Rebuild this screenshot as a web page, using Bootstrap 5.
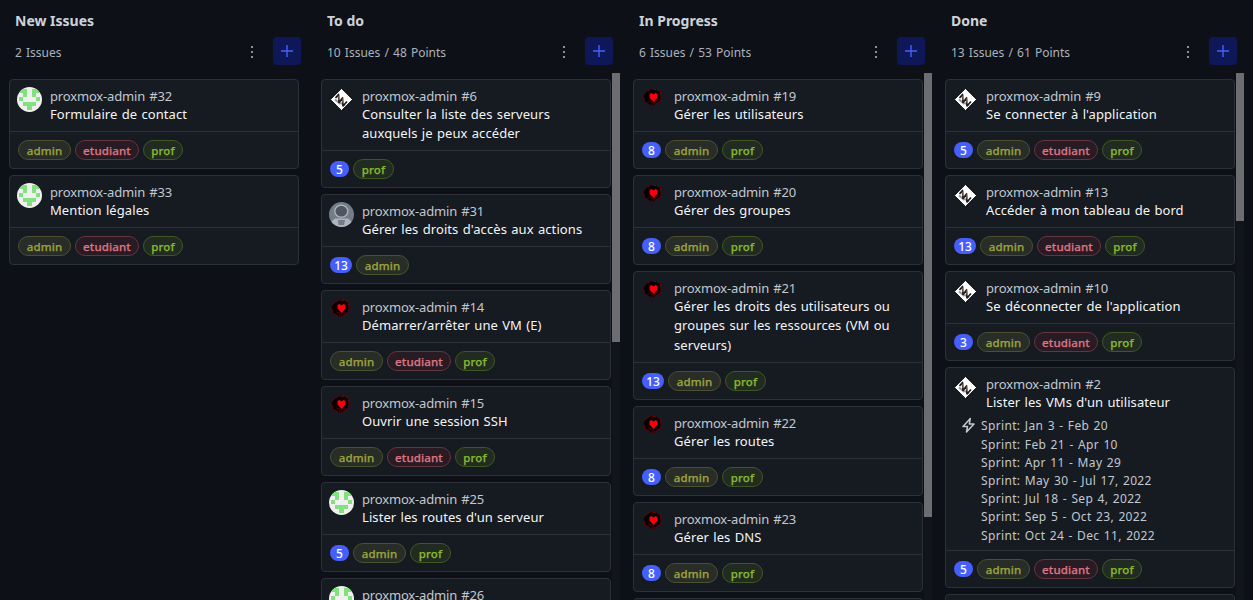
<!DOCTYPE html>
<html lang="fr" data-bs-theme="dark">
<head>
<meta charset="utf-8">
<meta name="viewport" content="width=device-width, initial-scale=1">
<title>Board</title>
<link href="https://cdn.jsdelivr.net/npm/bootstrap@5.3.0/dist/css/bootstrap.min.css" rel="stylesheet">
<style>
body{background:#0d1017;color:#c5cbd3;font-family:"Noto Sans",sans-serif;font-size:13px;height:600px;overflow:hidden}
.board{height:600px;padding-left:9px;gap:10px}
.lane{width:302px;flex:none}
.lane-title{font-size:14px;font-weight:700;line-height:20px;padding:11px 0 0 6px;color:#cdd3da}
.lane-bar{height:28px;margin:6px 10px 8px 6px;color:#abb2bb}
.lane-bar .count{font-size:12px;line-height:24px;padding-top:4px;word-spacing:1px}
.dots{margin-top:2px}
.add{width:28px;height:28px;background:#0e1858;border-radius:4px;margin-left:14px}
.lane-list{flex:1;min-height:0;overflow:hidden;padding-top:6px;gap:6px}
.issue{width:290px;flex:none;background:#161a21;border:1px solid #2c3038;border-radius:4px}
.issue-head{padding:7px 7px 6.55px}
.issue-body{margin-left:8px}
.ref{line-height:18px;color:#c1c8d0;letter-spacing:-.17px;word-spacing:1px}
.ttl{line-height:19.45px;color:#f3f5f7;letter-spacing:.08px;word-spacing:.8px;min-height:19.45px}
.foot{border-top:1px solid #2c3038;padding:8px;height:37px;gap:4px}
.sprints{margin:5px 0 -1.4px 9px;font-size:12px;line-height:18.2px;color:#c1c8d0;gap:6px;letter-spacing:.35px;word-spacing:.9px}
.pt{background:#465ffa;color:#fff;height:16px;width:19px;border-radius:8px;font-size:12px;line-height:18px;text-align:center;font-weight:500}
.pt.wide{width:22px}
.tag{height:20px;line-height:19px;border:1px solid;border-radius:10px;font-size:11.5px;font-weight:500;letter-spacing:.15px;text-align:center;white-space:nowrap;-webkit-text-stroke:.25px}
.admin{width:53px;color:#9ba33f;background:#292d27;border-color:#4a5030}
.etudiant{width:64px;color:#dd7585;background:#291b23;border-color:#66343f}
.prof{width:40px;color:#86b92b;background:#222b22;border-color:#40571f}
.pt+.prof,.pt~.admin+.prof{width:41px}
.track{top:73px;right:3px;width:8px;bottom:0;background:#11141b}
.thumb{width:8px;background:#6c6d70}
</style>
</head>
<body>
<svg class="d-none">
<symbol id="pixel" viewBox="0 0 25 25"><circle cx="12.5" cy="12.5" r="12.5" fill="#f0f0f0"/><g clip-path="url(#round)" fill="#82e07e" shape-rendering="crispEdges"><path d="M2 2h8v8H6V6H2zM15 2h8v4h-4v4h-4zM2 10h4v4H2zM19 10h4v4h-4zM6 14.500h13V19h-4v4h-5v-4H6z"/></g></symbol>
<symbol id="diamond" viewBox="0 0 25 25"><path d="M12.5 1.500 23.500 12.5 12.5 23.500 1.500 12.5z" fill="#fff" stroke="#050607" stroke-width=".8"/><path d="m6 12.500 5.500 4.500M11 15.500l5 3" stroke="#999" stroke-width="2"/><path d="m6.500 11 3-3.500.5 8 3.500-4.500.5 8 4-4.500" fill="none" stroke="#211a1c" stroke-width="1.7" stroke-linejoin="round"/><path d="m9.300 8.500.8 5M13.300 11.500l.8 5" stroke="#b58586" stroke-width=".6"/></symbol>
<symbol id="heart" viewBox="0 0 25 25"><path d="m8.500 3 1-1.500 2.500 1 3.500 0 2 1.500 2.500 0-1 3 1 3.500-1 4.500-3 1-2.500 3-2-.5-2 .5-2-2.500-3.500-1-1-4.500-1-1 1-3 2.500-2.500z" fill="#050204" stroke="#740009" stroke-dasharray="2 .8"/><path d="m7 14 4 1v3M17 14l-4 1v3" fill="none" stroke="#500007"/><path d="M12.500 15 8.500 10.500V7l2-1 2 1.500L14.500 6l2 1v3.500z" fill="#fb0009"/></symbol>
<symbol id="person" viewBox="0 0 25 25"><circle cx="12.500" cy="12.500" r="12.500" fill="#757c87"/><g clip-path="url(#round)"><path d="M1 25v-4l5-4.500h13l5 4.500v4z" fill="#aeb5bf"/><path d="M9 18h7l-1 5H9.500z" fill="#757c87"/></g><ellipse cx="12.300" cy="9.200" rx="6.500" ry="6" fill="#4f5661" stroke="#aeb5bf" stroke-width="1.300"/></symbol>
</svg>
<svg width="0" height="0" class="position-absolute"><clipPath id="round"><circle cx="12.5" cy="12.5" r="12.5"/></clipPath></svg>
<main class="board d-flex" id="board"></main>
<script>
const A='admin',E='etudiant',P='prof';
const lanes=[
 ['New Issues','2 Issues',0,[['pixel',32,'Formulaire de contact',0,[A,E,P]],['pixel',33,'Mention légales',0,[A,E,P]]]],
 ['To do','10 Issues / 48 Points',269,[['diamond',6,'Consulter la liste des serveurs<br>auxquels je peux accéder',5,[P]],['person',31,"Gérer les droits d'accès aux actions",13,[A]],['heart',14,'Démarrer/arrêter une VM (E)',0,[A,E,P]],['heart',15,'Ouvrir une session SSH',0,[A,E,P]],['pixel',25,"Lister les routes d'un serveur",5,[A,P]],['pixel',26,'',0,[]]]],
 ['In Progress','6 Issues / 53 Points',444,[['heart',19,'Gérer les utilisateurs',8,[A,P]],['heart',20,'Gérer des groupes',8,[A,P]],['heart',21,'Gérer les droits des utilisateurs ou<br>groupes sur les ressources (VM ou<br>serveurs)',13,[A,P]],['heart',22,'Gérer les routes',8,[A,P]],['heart',23,'Gérer les DNS',8,[A,P]],['heart',0,'',0,[]]]],
 ['Done','13 Issues / 61 Points',148,[['diamond',9,"Se connecter à l'application",5,[A,E,P]],['diamond',13,'Accéder à mon tableau de bord',13,[A,E,P]],['diamond',10,"Se déconnecter de l'application",3,[A,E,P]],['diamond',2,"Lister les VMs d'un utilisateur",5,[A,E,P],['Jan 3 - Feb 20','Feb 21 - Apr 10','Apr 11 - May 29','May 30 - Jul 17, 2022','Jul 18 - Sep 4, 2022','Sep 5 - Oct 23, 2022','Oct 24 - Dec 11, 2022']],['diamond',0,'',0,[]]]]
];
const bolt='<svg width="13" height="16" viewBox="0 0 13 16" class="flex-shrink-0" fill="none" stroke="#c1c8d0" stroke-width="1.5" stroke-linejoin="round"><path d="M8.300 1.500 1 9.500h4.500L4.500 15 12 7H7.300z"/></svg>';
const issue=([av,n,t,p,tags,sp])=>`<article class="issue"><div class="issue-head"><div class="d-flex align-items-start"><svg width="25" height="25" class="flex-shrink-0"><use href="#${av}"/></svg><div class="issue-body text-nowrap"><div class="ref">${n?'proxmox-admin #'+n:''}</div><div class="ttl">${t}</div></div></div>${sp?`<div class="sprints d-flex">${bolt}<div>${sp.map(s=>`<div>Sprint: ${s}</div>`).join('')}</div></div>`:''}</div><div class="foot d-flex align-items-center">${p?`<span class="pt${p>9?' wide':''}">${p}</span>`:''}${tags.map(x=>`<span class="tag ${x}">${x}</span>`).join('')}</div></article>`;
document.getElementById('board').innerHTML=lanes.map(([h,c,th,list])=>`<section class="lane d-flex flex-column position-relative"><h2 class="lane-title mb-0">${h}</h2><div class="lane-bar d-flex align-items-center"><span class="count me-auto">${c}</span><svg class="dots" width="14" height="16" fill="#8b929c"><path d="M6 2h2v2H6zM6 7h2v2H6zM6 12h2v2H6z"/></svg><span class="add d-flex align-items-center justify-content-center"><svg width="12" height="12" stroke="#465ffa" stroke-width="1.4"><path d="M6 0v12M0 6h12"/></svg></span></div><div class="lane-list d-flex flex-column">${list.map(issue).join('')}</div>${th?`<div class="track position-absolute"><div class="thumb" style="height:${th}px"></div></div>`:''}</section>`).join('');
</script>
<script src="https://cdn.jsdelivr.net/npm/bootstrap@5.3.0/dist/js/bootstrap.bundle.min.js"></script>
</body>
</html>
